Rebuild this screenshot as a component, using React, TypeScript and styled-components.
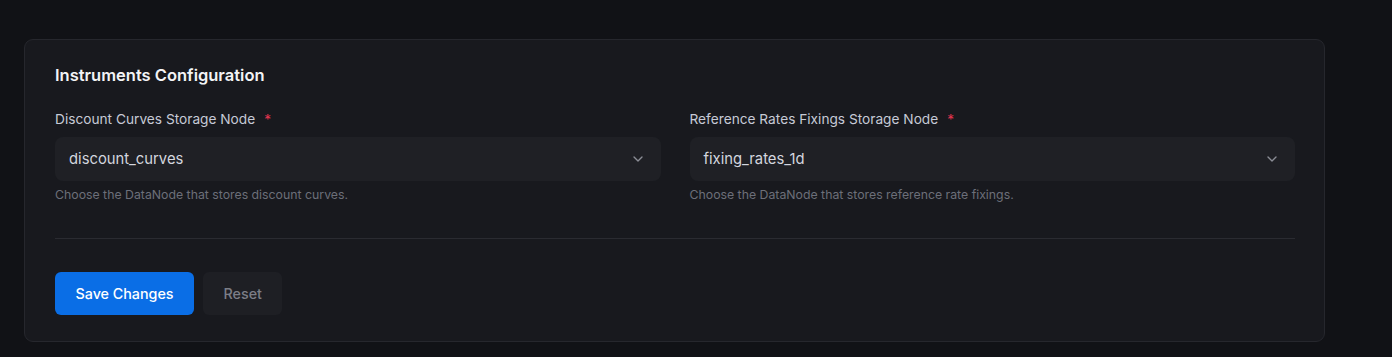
import React, { FC } from 'react'
import styled, { createGlobalStyle } from 'styled-components'
import { ChevronDown } from 'lucide-react'

const GlobalStyle = createGlobalStyle`
	html, body {
		margin: 0;
		padding: 0;
		background: #111216;
		font-family: Inter, 'Noto Sans', sans-serif;
		-webkit-font-smoothing: antialiased;
	}
`

type FieldType = {
	label: string
	value: string
	help: string
}

const fields: FieldType[] = [
	{
		label: 'Discount Curves Storage Node',
		value: 'discount_curves',
		help: 'Choose the DataNode that stores discount curves.',
	},
	{
		label: 'Reference Rates Fixings Storage Node',
		value: 'fixing_rates_1d',
		help: 'Choose the DataNode that stores reference rate fixings.',
	},
]

const App: FC = () => {
	return (
		<Page>
			<GlobalStyle />
			<Card>
				<Title>Instruments Configuration</Title>
				<Grid>
					{fields.map((f) => (
						<Field key={f.label}>
							<Label>
								{f.label}
								<Required>*</Required>
							</Label>
							<Select>
								<span>{f.value}</span>
								<ChevronDown size={16} strokeWidth={2} color='#8b8d96' />
							</Select>
							<Help>{f.help}</Help>
						</Field>
					))}
				</Grid>
				<Divider />
				<Actions>
					<Button variant='primary'>Save Changes</Button>
					<Button variant='ghost'>Reset</Button>
				</Actions>
			</Card>
		</Page>
	)
}

const Page = styled.div`
	padding: 39px 67px 15px 24px;
`

const Card = styled.section`
	background: #18191e;
	border: 1px solid #26272d;
	border-radius: 9px;
	padding: 25px 29px 26px 30px;
`

const Title = styled.h2`
	margin: 0 0 24px;
	font-size: 16.5px;
	line-height: 20px;
	font-weight: 600;
	color: #f3f4f6;
`

const Grid = styled.div`
	display: grid;
	grid-template-columns: 1fr 1fr;
	column-gap: 29px;
`

const Field = styled.div`
	display: flex;
	flex-direction: column;
`

const Label = styled.label`
	font-size: 13.7px;
	line-height: 20px;
	font-weight: 400;
	color: #c6cad6;
	margin-bottom: 8px;
`

const Required = styled.span`
	color: #e3344f;
	margin-left: 9px;
`

const Select = styled.div`
	height: 44px;
	box-sizing: border-box;
	display: flex;
	align-items: center;
	justify-content: space-between;
	padding: 0 15px 0 14px;
	background: #1f2025;
	border-radius: 8px;
	font-size: 14.8px;
	font-weight: 400;
	color: #d3d6df;
`

const Help = styled.p`
	margin: 6px 0 0;
	font-size: 12.3px;
	line-height: 16px;
	color: #6c6f79;
`

const Divider = styled.hr`
	border: none;
	height: 1px;
	background: #2a2b31;
	margin: 35px 0 33px;
`

const Actions = styled.div`
	display: flex;
	gap: 9px;
`

const Button = styled.button<{ variant: 'primary' | 'ghost' }>`
	height: 43px;
	padding: 0 20.5px;
	border: none;
	border-radius: 6px;
	font-family: inherit;
	font-size: 14.3px;
	font-weight: 500;
	cursor: pointer;
	background: ${({ variant }) => (variant === 'primary' ? '#0a6ee6' : '#1e1f24')};
	color: ${({ variant }) => (variant === 'primary' ? '#ffffff' : '#7c7e87')};
`

export default App
